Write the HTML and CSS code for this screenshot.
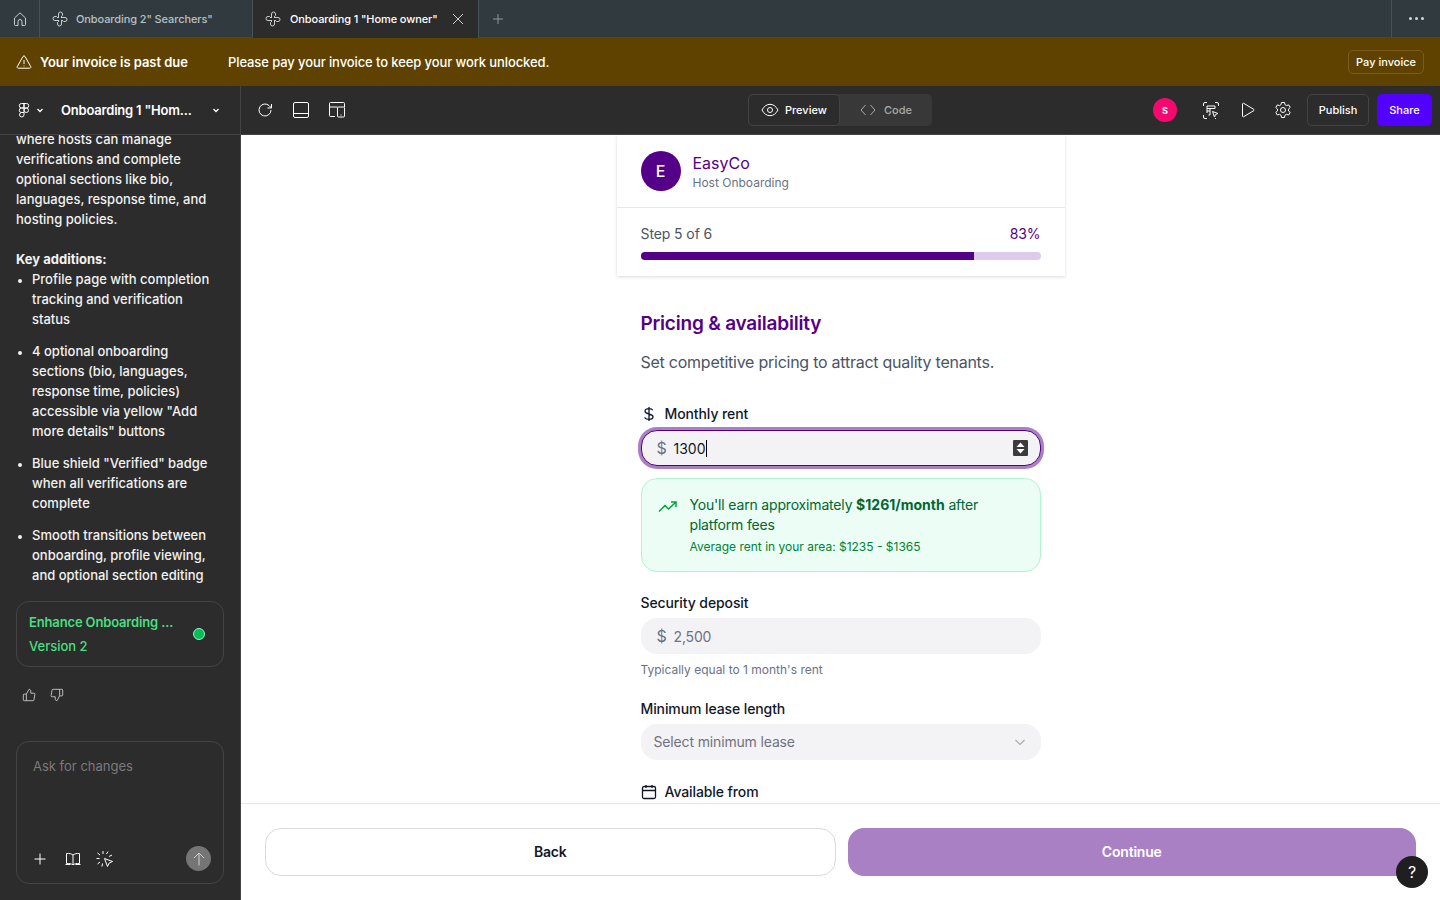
FILE: index.html
```html
<!DOCTYPE html>
<html lang="en">
<head>
    <meta charset="UTF-8">
    <meta name="viewport" content="width=device-width, initial-scale=1.0">
    <title>Onboarding 1 "Home owner"</title>
    <link rel="stylesheet" href="styles.css">
</head>
<body>
    <div class="tabbar">
        <div class="tab-home">
            <svg class="icon" width="16" height="16" viewBox="0 0 16 16"><path d="M2.500 7 8 1.800 13.500 7v6.500a1 1 0 0 1-1 1H10V10.500a2 2 0 0 0-4 0v4H3.500a1 1 0 0 1-1-1z"/></svg>
        </div>
        <div class="tab">
            <svg class="icon" width="16" height="16" viewBox="0 0 16 16"><path d="M6.500 7V3a2 2 0 0 1 4 0v1.500L9 6M9 6.500h4a2 2 0 0 1 0 4h-1.500L10 9M9.500 9v4a2 2 0 0 1-4 0v-1.500L7 10M7 9.500H3a2 2 0 0 1 0-4h1.500L6 7"/></svg>
            <span>Onboarding 2" Searchers"</span>
        </div>
        <div class="tab tab-active">
            <svg class="icon" width="16" height="16" viewBox="0 0 16 16"><path d="M6.500 7V3a2 2 0 0 1 4 0v1.500L9 6M9 6.500h4a2 2 0 0 1 0 4h-1.500L10 9M9.500 9v4a2 2 0 0 1-4 0v-1.500L7 10M7 9.500H3a2 2 0 0 1 0-4h1.500L6 7"/></svg>
            <span>Onboarding 1 "Home owner"</span>
            <svg class="icon tab-close" width="12" height="12" viewBox="0 0 12 12"><path d="M1 1l10 10M11 1 1 11"/></svg>
        </div>
        <div class="tab-add">
            <svg class="icon" width="12" height="12" viewBox="0 0 12 12"><path d="M6 1v10M1 6h10"/></svg>
        </div>
        <div class="tab-more"><i></i><i></i><i></i></div>
    </div>

    <div class="banner">
        <svg class="icon" width="16" height="16" viewBox="0 0 16 16"><path d="M7 2.500a1.200 1.200 0 0 1 2 0l5.700 10a1.100 1.100 0 0 1-1 1.700H2.300a1.100 1.100 0 0 1-1-1.700zM8 6v4M8 11.500v.8"/></svg>
        <strong>Your invoice is past due</strong>
        <span class="banner-text">Please pay your invoice to keep your work unlocked.</span>
        <button class="pay-btn">Pay invoice</button>
    </div>

    <div class="toolbar">
        <div class="toolbar-left">
            <svg class="icon" width="16" height="16" viewBox="0 0 16 16"><path d="M8 1.500H5.500a2.250 2.250 0 0 0 0 4.500H8zM8 1.500h2.500a2.250 2.250 0 0 1 0 4.500H8zM8 6H5.500a2.250 2.250 0 0 0 0 4.500H8zM8 8.250a2.250 2.250 0 1 0 4.500 0 2.250 2.250 0 1 0-4.500 0M8 10.500H5.500A2.250 2.250 0 1 0 8 12.750z"/></svg>
            <svg class="icon caret" width="8" height="8" viewBox="0 0 8 8"><path d="M1.500 3 4 5.500 6.500 3"/></svg>
            <span class="file-name">Onboarding 1 "Hom...</span>
            <svg class="icon caret" width="8" height="8" viewBox="0 0 8 8"><path d="M1.500 3 4 5.500 6.500 3"/></svg>
        </div>
        <div class="toolbar-tools">
            <svg class="icon" width="16" height="16" viewBox="0 0 16 16"><path d="M14 8a6 6 0 1 1-1.800-4.300L14.500 6M14.500 2v4h-4"/></svg>
            <svg class="icon" width="16" height="16" viewBox="0 0 16 16"><rect x="0.500" y="0.500" width="15" height="15" rx="1.500"/><path d="M.5 11.500h15"/></svg>
            <svg class="icon" width="16" height="16" viewBox="0 0 16 16"><path d="M6 14.500H1.500a1 1 0 0 1-1-1V1.500a1 1 0 0 1 1-1h13a1 1 0 0 1 1 1V5M.5 5h8"/><rect x="8.500" y="5" width="7" height="10" rx="1"/><path d="M12 12.500v1"/></svg>
        </div>
        <div class="view-switch">
            <div class="view-btn view-btn-active">
                <svg class="icon" width="18" height="14" viewBox="0 0 18 14"><path d="M1 7c2-3.800 4.800-5.700 8-5.700s6 1.900 8 5.700c-2 3.800-4.800 5.700-8 5.700S3 10.800 1 7z"/><circle cx="9" cy="7" r="2.500"/></svg>
                <span>Preview</span>
            </div>
            <div class="view-btn">
                <svg class="icon" width="16" height="12" viewBox="0 0 16 12"><path d="M5.500 1 1 6l4.500 5M10.500 1 15 6l-4.500 5"/></svg>
                <span>Code</span>
            </div>
        </div>
        <div class="toolbar-right">
            <div class="user-dot">S</div>
            <svg class="icon" width="16" height="17" viewBox="0 0 16 17"><path d="M.5 4V2A1.500 1.500 0 0 1 2 .5h2M12 .5h2A1.500 1.500 0 0 1 15.500 2v2M.5 13v2A1.500 1.500 0 0 0 2 16.500h2M12 16.500h1"/><path d="M4 11V4h8v2.500M4 6.500h8M7 6.500V13H5.500M4 9h3"/><path d="M9.500 9.500l5.500 2-2.500 1-1 2.500z"/></svg>
            <svg class="icon tool-play" width="16" height="16" viewBox="0 0 16 16"><path d="M2.500 2v12a.8.8 0 0 0 1.200.7l10-6a.8.8 0 0 0 0-1.400l-10-6a.8.8 0 0 0-1.200.7z"/></svg>
            <svg class="icon tool-gear" width="18" height="18" viewBox="0 0 18 18"><path d="M7.500 1.500h3l.5 2.200 1.500.9 2.200-.7 1.500 2.600-1.700 1.500v1.900l1.700 1.500-1.500 2.600-2.200-.7-1.500.9-.5 2.300h-3L7 14.200l-1.500-.9-2.200.7-1.500-2.600 1.700-1.500V8L1.800 6.500l1.500-2.600 2.200.7 1.500-.9z"/><circle cx="9" cy="9" r="2.500"/></svg>
            <button class="publish-btn">Publish</button>
            <button class="share-btn">Share</button>
        </div>
    </div>

    <div class="main">
        <aside class="sidebar">
            <div class="chat">
                <p>where hosts can manage verifications and complete optional sections like bio, languages, response time, and hosting policies.</p>
                <p class="chat-heading"><strong>Key additions:</strong></p>
                <ul>
                    <li>Profile page with completion tracking and verification status</li>
                    <li>4 optional onboarding sections (bio, languages, response time, policies) accessible via yellow "Add more details" buttons</li>
                    <li>Blue shield "Verified" badge when all verifications are complete</li>
                    <li>Smooth transitions between onboarding, profile viewing, and optional section editing</li>
                </ul>
            </div>
            <div class="version-card">
                <div class="version-text">
                    <div class="version-title">Enhance Onboarding ...</div>
                    <div>Version 2</div>
                </div>
                <span class="version-dot"></span>
            </div>
            <div class="feedback">
                <svg class="icon" width="14" height="14" viewBox="0 0 16 16"><path d="M5 7v7.500H2.500a1 1 0 0 1-1-1V8a1 1 0 0 1 1-1zM5 7l3-5.500c1.200 0 2 .8 2 2V6h3.500a1.200 1.200 0 0 1 1.200 1.400l-1 5.900a1.300 1.300 0 0 1-1.300 1.200H5"/></svg>
                <svg class="icon" width="14" height="14" viewBox="0 0 16 16"><path d="M11 9V1.500h2.500a1 1 0 0 1 1 1V8a1 1 0 0 1-1 1zM11 9l-3 5.500c-1.200 0-2-.8-2-2V10H2.500a1.200 1.200 0 0 1-1.200-1.400l1-5.900a1.300 1.300 0 0 1 1.300-1.200H11"/></svg>
            </div>
            <div class="prompt">
                <div class="prompt-placeholder">Ask for changes</div>
                <div class="prompt-actions">
                    <svg class="icon" width="12" height="12" viewBox="0 0 12 12"><path d="M6 .5v11M.5 6h11"/></svg>
                    <svg class="icon prompt-book" width="16" height="14" viewBox="0 0 16 14"><path d="M8 3C6.500 1.800 4.500 1.300 1.500 1.500v10c3-.2 5 .3 6.500 1.300 1.500-1 3.500-1.500 6.500-1.300v-10C11.500 1.300 9.500 1.800 8 3zM8 3v9.800M.5 12.500h5M10.500 12.500h5"/></svg>
                    <svg class="icon" width="18" height="18" viewBox="0 0 18 18"><path d="M8.500 8.500l8 3-3.300 1.500-1.700 3.500zM7 1v3M1.500 3l2.500 2M.5 8.500h3M1.500 14l2.500-2M6.500 13.500 6 16.500M12 1.500 10.500 4M16 5l-3 1.500"/></svg>
                    <button class="send-btn">
                        <svg class="icon" width="12" height="14" viewBox="0 0 12 14"><path d="M6 13.500V1M1 6l5-5 5 5"/></svg>
                    </button>
                </div>
            </div>
        </aside>

        <section class="preview">
            <div class="preview-scroll">
                <div class="form-col">
                    <div class="card">
                        <div class="brand">
                            <div class="avatar">E</div>
                            <div>
                                <div class="brand-name">EasyCo</div>
                                <div class="brand-sub">Host Onboarding</div>
                            </div>
                        </div>
                        <div class="progress">
                            <div class="progress-row">
                                <span>Step 5 of 6</span>
                                <span class="progress-pct">83%</span>
                            </div>
                            <div class="progress-track">
                                <div class="progress-fill" style="width: 83.33%"></div>
                            </div>
                        </div>
                    </div>

                    <div class="form-body">
                        <h2>Pricing &amp; availability</h2>
                        <p class="lead">Set competitive pricing to attract quality tenants.</p>

                        <label class="field-label field-first">
                            <svg class="dark-icon" width="16" height="16" viewBox="0 0 16 16"><path d="M8 1v14M11.800 4.200C11.200 3 9.800 2.700 8 2.700c-2.200 0-4 1-4 2.600S6 7.500 8 8s4 1.100 4 2.800-1.800 2.600-4 2.600-3.800-.6-4.300-2"/></svg>
                            Monthly rent
                        </label>
                        <div class="input input-focus">
                            <span class="prefix">$</span>
                            <span class="input-value">1300</span>
                            <span class="caret-bar"></span>
                            <span class="spinner">
                                <svg width="15" height="16" viewBox="0 0 15 16"><path d="M7.500 2.500 11.500 7h-8zM7.500 13.500 3.500 9h8z" fill="#fff"/></svg>
                            </span>
                        </div>

                        <div class="earn-box">
                            <svg class="earn-icon" width="20" height="20" viewBox="0 0 20 20"><path d="M1 14.500 7 8.500l3.500 3.500L18 5M13 5h5v5"/></svg>
                            <div>
                                <div class="earn-text">You'll earn approximately <strong>$1261/month</strong> after platform fees</div>
                                <div class="earn-sub">Average rent in your area: $1235 - $1365</div>
                            </div>
                        </div>

                        <label class="field-label field-gap">Security deposit</label>
                        <div class="input">
                            <span class="prefix">$</span>
                            <span class="input-placeholder">2,500</span>
                        </div>
                        <div class="hint">Typically equal to 1 month's rent</div>

                        <label class="field-label field-gap-sm">Minimum lease length</label>
                        <div class="input input-select">
                            <span class="input-placeholder">Select minimum lease</span>
                            <svg class="select-caret" width="12" height="12" viewBox="0 0 12 12"><path d="M1.500 4 6 8.500 10.500 4"/></svg>
                        </div>

                        <label class="field-label field-gap-xs">
                            <svg class="dark-icon" width="16" height="16" viewBox="0 0 16 16"><rect x="1.500" y="2.500" width="13" height="12" rx="1.500"/><path d="M1.500 6.500h13M5 1v3M11 1v3"/></svg>
                            Available from
                        </label>
                    </div>
                </div>
            </div>
            <div class="footer">
                <button class="back-btn">Back</button>
                <button class="continue-btn">Continue</button>
            </div>
            <div class="help-btn">?</div>
        </section>
    </div>
</body>
</html>
```

FILE: styles.css
```css
* {
    box-sizing: border-box;
}

html, body {
    height: 100%;
}

body {
    margin: 0;
    height: 900px;
    overflow: hidden;
    display: flex;
    flex-direction: column;
    font-family: Inter, "Liberation Sans", sans-serif;
    font-size: 14px;
    color: #fff;
    background-color: #2c2c2c;
}

button {
    font-family: inherit;
    cursor: pointer;
}

.icon {
    fill: none;
    stroke: #fff;
    stroke-width: 1;
    flex: none;
}

/* tabs */
.tabbar {
    height: 38px;
    flex: none;
    display: flex;
    background-color: #313b3f;
    border-bottom: 1px solid #3d4b50;
    font-size: 11px;
    font-weight: 500;
    letter-spacing: -0.1px;
}

.tab-home {
    width: 40px;
    display: flex;
    align-items: center;
    justify-content: center;
    border-right: 1px solid #46545a;
}

.tab-home .icon,
.tab .icon,
.tab-add .icon {
    stroke: #c9cfd1;
}

.tab {
    width: 213px;
    display: flex;
    align-items: center;
    gap: 8px;
    padding-left: 12px;
    color: #b9c0c3;
    border-right: 1px solid #46545a;
}

.tab-active {
    width: 226px;
    height: 38px;
    gap: 9px;
    color: #fff;
    background-color: #2c2c2c;
    border-right: 1px solid #46545a;
}

.tab-active .tab-close {
    margin-left: 5px;
}

.tab-add {
    width: 38px;
    display: flex;
    align-items: center;
    justify-content: center;
}

.tab-add .icon {
    stroke: #8d9699;
}

.tab-more {
    margin-left: auto;
    width: 49px;
    display: flex;
    align-items: center;
    justify-content: center;
    gap: 3px;
    border-left: 1px solid #46545a;
}

.tab-more i {
    width: 3px;
    height: 3px;
    border-radius: 50%;
    background-color: #d8d8d8;
}

/* banner */
.banner {
    height: 48px;
    flex: none;
    display: flex;
    align-items: center;
    padding: 0 16px;
    background-color: #5f4200;
    font-size: 13px;
    font-weight: 500;
}

.banner .icon {
    margin-right: 8px;
}

.banner strong {
    width: 188px;
    font-weight: 600;
    letter-spacing: -0.05px;
}

.banner-text {
    letter-spacing: -0.1px;
}

.pay-btn {
    margin-left: auto;
    height: 24px;
    padding: 0 7px;
    color: #fff;
    font-size: 11px;
    font-weight: 500;
    background: transparent;
    border: 1px solid #7a5d1e;
    border-radius: 5px;
}

/* toolbar */
.toolbar {
    height: 49px;
    flex: none;
    display: flex;
    align-items: center;
    background-color: #2c2c2c;
    border-bottom: 1px solid #444;
    position: relative;
}

.toolbar-left {
    width: 241px;
    height: 48px;
    flex: none;
    display: flex;
    align-items: center;
    padding-left: 16px;
    border-right: 1px solid #444;
}

.toolbar-left .caret {
    margin-left: 4px;
    stroke-width: 1.3;
}

.file-name {
    width: 147px;
    margin-left: 17px;
    font-size: 13px;
    font-weight: 600;
    letter-spacing: -0.2px;
}

.toolbar-tools {
    display: flex;
    align-items: center;
    gap: 20px;
    padding-left: 16px;
}

.view-switch {
    position: absolute;
    left: 748px;
    top: 8px;
    width: 184px;
    height: 32px;
    display: flex;
    background-color: #383838;
    border-radius: 5px;
    font-size: 11px;
    font-weight: 500;
}

.view-btn {
    display: flex;
    align-items: center;
    gap: 6px;
    padding: 0 12px;
    color: #a8a8a8;
}

.view-btn .icon {
    stroke: #a8a8a8;
}

.view-btn-active {
    width: 92px;
    color: #fff;
    background-color: #2c2c2c;
    border: 1px solid #444;
    border-radius: 5px;
}

.view-btn-active .icon {
    stroke: #fff;
}

.view-btn + .view-btn {
    gap: 8px;
    padding-left: 20px;
}

.toolbar-right {
    margin-left: auto;
    display: flex;
    align-items: center;
    padding-right: 8px;
}

.user-dot {
    width: 24px;
    height: 24px;
    margin-right: 26px;
    display: flex;
    align-items: center;
    justify-content: center;
    border-radius: 50%;
    background-color: #f5096f;
    font-size: 9px;
    font-weight: 700;
}

.tool-play {
    margin-left: 21px;
}

.tool-gear {
    margin-left: 18px;
}

.publish-btn,
.share-btn {
    height: 32px;
    color: #fff;
    font-size: 11px;
    font-weight: 500;
    border-radius: 5px;
}

.publish-btn {
    width: 62px;
    margin-left: 15px;
    background: transparent;
    border: 1px solid #444;
}

.share-btn {
    width: 55px;
    margin-left: 8px;
    background-color: #5200ff;
    border: none;
}

/* main */
.main {
    flex: 1;
    min-height: 0;
    display: flex;
}

.sidebar {
    width: 241px;
    flex: none;
    display: flex;
    flex-direction: column;
    padding: 0 16px 16px;
    border-right: 1px solid #444;
    background-color: #2c2c2c;
}

.chat {
    height: 466px;
    flex: none;
    display: flex;
    flex-direction: column;
    justify-content: flex-end;
    overflow: hidden;
    padding-bottom: 16px;
    font-size: 13px;
    font-weight: 500;
    line-height: 20px;
    color: #f2f2f2;
}

.chat p {
    margin: 0 0 20px;
}

.chat .chat-heading {
    margin: 0;
}

.chat strong {
    font-weight: 700;
}

.chat ul {
    margin: 0;
    padding-left: 16px;
}

.chat li + li {
    margin-top: 12px;
}

.chat li::marker {
    font-size: 11px;
}

.version-card {
    height: 66px;
    flex: none;
    display: flex;
    align-items: center;
    justify-content: space-between;
    padding: 0 18px 0 12px;
    border: 1px solid #444;
    border-radius: 13px;
    color: #4ade80;
    font-size: 13px;
    font-weight: 500;
}

.version-title {
    margin-bottom: 8px;
    font-weight: 600;
    letter-spacing: -0.15px;
}

.version-dot {
    width: 12px;
    height: 12px;
    border-radius: 50%;
    background-color: #00c05a;
    border: 1px solid #9ff0c0;
}

.feedback {
    display: flex;
    gap: 14px;
    margin-top: 21px;
    padding-left: 6px;
}

.feedback .icon {
    stroke: #cfcfcf;
}

.prompt {
    height: 143px;
    margin-top: 39px;
    flex: none;
    display: flex;
    flex-direction: column;
    justify-content: space-between;
    padding: 16px 16px 12px;
    border: 1px solid #444;
    border-radius: 13px;
}

.prompt-placeholder {
    font-size: 13px;
    color: #7a7a7a;
}

.prompt-actions {
    display: flex;
    align-items: center;
    gap: 15px;
    padding-left: 1px;
}

.prompt-book {
    margin-left: 4px;
}

.send-btn {
    width: 25px;
    height: 25px;
    margin-left: auto;
    margin-right: -4px;
    padding: 0;
    display: flex;
    align-items: center;
    justify-content: center;
    border: none;
    border-radius: 50%;
    background-color: #757575;
}

.send-btn .icon {
    stroke: #d0d0d0;
}

/* preview */
.preview {
    flex: 1;
    min-width: 0;
    display: flex;
    flex-direction: column;
    position: relative;
    background-color: #fff;
    color: #101828;
}

.preview-scroll {
    flex: 1;
    min-height: 0;
    overflow: hidden;
    display: flex;
    justify-content: center;
}

.form-col {
    width: 448px;
}

.card {
    background-color: #fff;
    box-shadow: 0 1px 3px rgba(0, 0, 0, 0.15);
}

.brand {
    display: flex;
    align-items: center;
    gap: 12px;
    height: 73px;
    padding: 0 24px;
    border-bottom: 1px solid #e5e7eb;
}

.avatar {
    width: 40px;
    height: 40px;
    display: flex;
    align-items: center;
    justify-content: center;
    border-radius: 50%;
    background-color: #550088;
    color: #fff;
    font-size: 16px;
    font-weight: 500;
}

.brand-name {
    font-size: 16px;
    line-height: 22px;
    color: #550088;
}

.brand-sub {
    margin-top: 1px;
    font-size: 12px;
    line-height: 16px;
    color: #6a7282;
}

.progress {
    height: 68px;
    padding: 16px 24px 0;
}

.progress-row {
    display: flex;
    justify-content: space-between;
    font-size: 14px;
    line-height: 20px;
    color: #4a5565;
    letter-spacing: -0.1px;
}

.progress-pct {
    color: #550088;
}

.progress-track {
    height: 8px;
    margin-top: 8px;
    overflow: hidden;
    border-radius: 4px;
    background-color: #ddcbec;
}

.progress-fill {
    height: 100%;
    background-color: #550088;
}

.form-body {
    padding: 33px 24px 0;
}

h2 {
    margin: 0;
    font-size: 19px;
    line-height: 30px;
    font-weight: 600;
    letter-spacing: -0.2px;
    color: #550088;
}

.lead {
    margin: 11px 0 0;
    font-size: 16px;
    line-height: 24px;
    letter-spacing: -0.25px;
    color: #4a5565;
}

.field-label {
    display: flex;
    align-items: center;
    gap: 8px;
    font-size: 14px;
    font-weight: 500;
    line-height: 20px;
    letter-spacing: -0.1px;
    color: #101828;
}

.field-first {
    margin-top: 30px;
    margin-bottom: 6px;
}

.field-gap {
    margin-top: 21px;
    margin-bottom: 5px;
}

.field-gap-sm {
    margin-top: 21px;
    margin-bottom: 5px;
}

.field-gap-xs {
    margin-top: 22px;
}

.dark-icon {
    fill: none;
    stroke: #101828;
    stroke-width: 1.3;
    flex: none;
}

.input {
    height: 36px;
    display: flex;
    align-items: center;
    padding: 0 16px;
    background-color: #f3f3f5;
    border-radius: 16px;
    font-size: 14px;
}

.input-focus {
    border: 1px solid #550088;
    box-shadow: 0 0 0 3px #aa80c4;
    padding: 0 12px 0 15px;
    color: #101828;
}

.prefix {
    width: 17px;
    font-size: 16px;
    color: #6a7282;
}

.input-placeholder {
    color: #717182;
    letter-spacing: -0.15px;
}

.caret-bar {
    width: 1px;
    height: 17px;
    background-color: #000;
}

.spinner {
    margin-left: auto;
    width: 15px;
    height: 16px;
    background-color: #3b3b3b;
    border-radius: 1px;
}

.spinner svg {
    display: block;
}

.earn-box {
    height: 94px;
    margin-top: 12px;
    display: flex;
    gap: 12px;
    padding: 16px;
    background-color: #ebfdf4;
    border: 1px solid #b0f5cd;
    border-radius: 16px;
}

.earn-icon {
    flex: none;
    margin-top: 2px;
    fill: none;
    stroke: #00a63e;
    stroke-width: 1.5;
}

.earn-text {
    line-height: 20px;
    letter-spacing: -0.17px;
    color: #016630;
}

.earn-text strong {
    font-weight: 700;
    letter-spacing: 0;
}

.earn-sub {
    margin-top: 4px;
    font-size: 12px;
    line-height: 16px;
    color: #008236;
}

.hint {
    margin-top: 8px;
    font-size: 12px;
    line-height: 16px;
    color: #6a7282;
}

.input-select {
    justify-content: space-between;
    padding: 0 15px 0 13px;
}

.input-select .input-placeholder {
    margin-top: -1px;
}

.select-caret {
    fill: none;
    stroke: #a8a8b0;
    stroke-width: 1.2;
}

.footer {
    height: 97px;
    flex: none;
    display: flex;
    gap: 12px;
    padding: 24px;
    background-color: #fff;
    border-top: 1px solid #e5e7eb;
}

.back-btn,
.continue-btn {
    flex: 1;
    height: 48px;
    padding: 0 0 1px;
    font-size: 14px;
    font-weight: 600;
    letter-spacing: -0.2px;
    border-radius: 16px;
}

.back-btn {
    color: #101828;
    background-color: #fff;
    border: 1px solid #d9dbe0;
}

.continue-btn {
    color: #fff;
    background-color: #aa80c4;
    border: none;
}

.help-btn {
    position: absolute;
    right: 12px;
    bottom: 12px;
    width: 32px;
    height: 32px;
    display: flex;
    align-items: center;
    justify-content: center;
    border-radius: 50%;
    background-color: #1f1f1f;
    color: #fff;
    font-size: 16px;
}
```
